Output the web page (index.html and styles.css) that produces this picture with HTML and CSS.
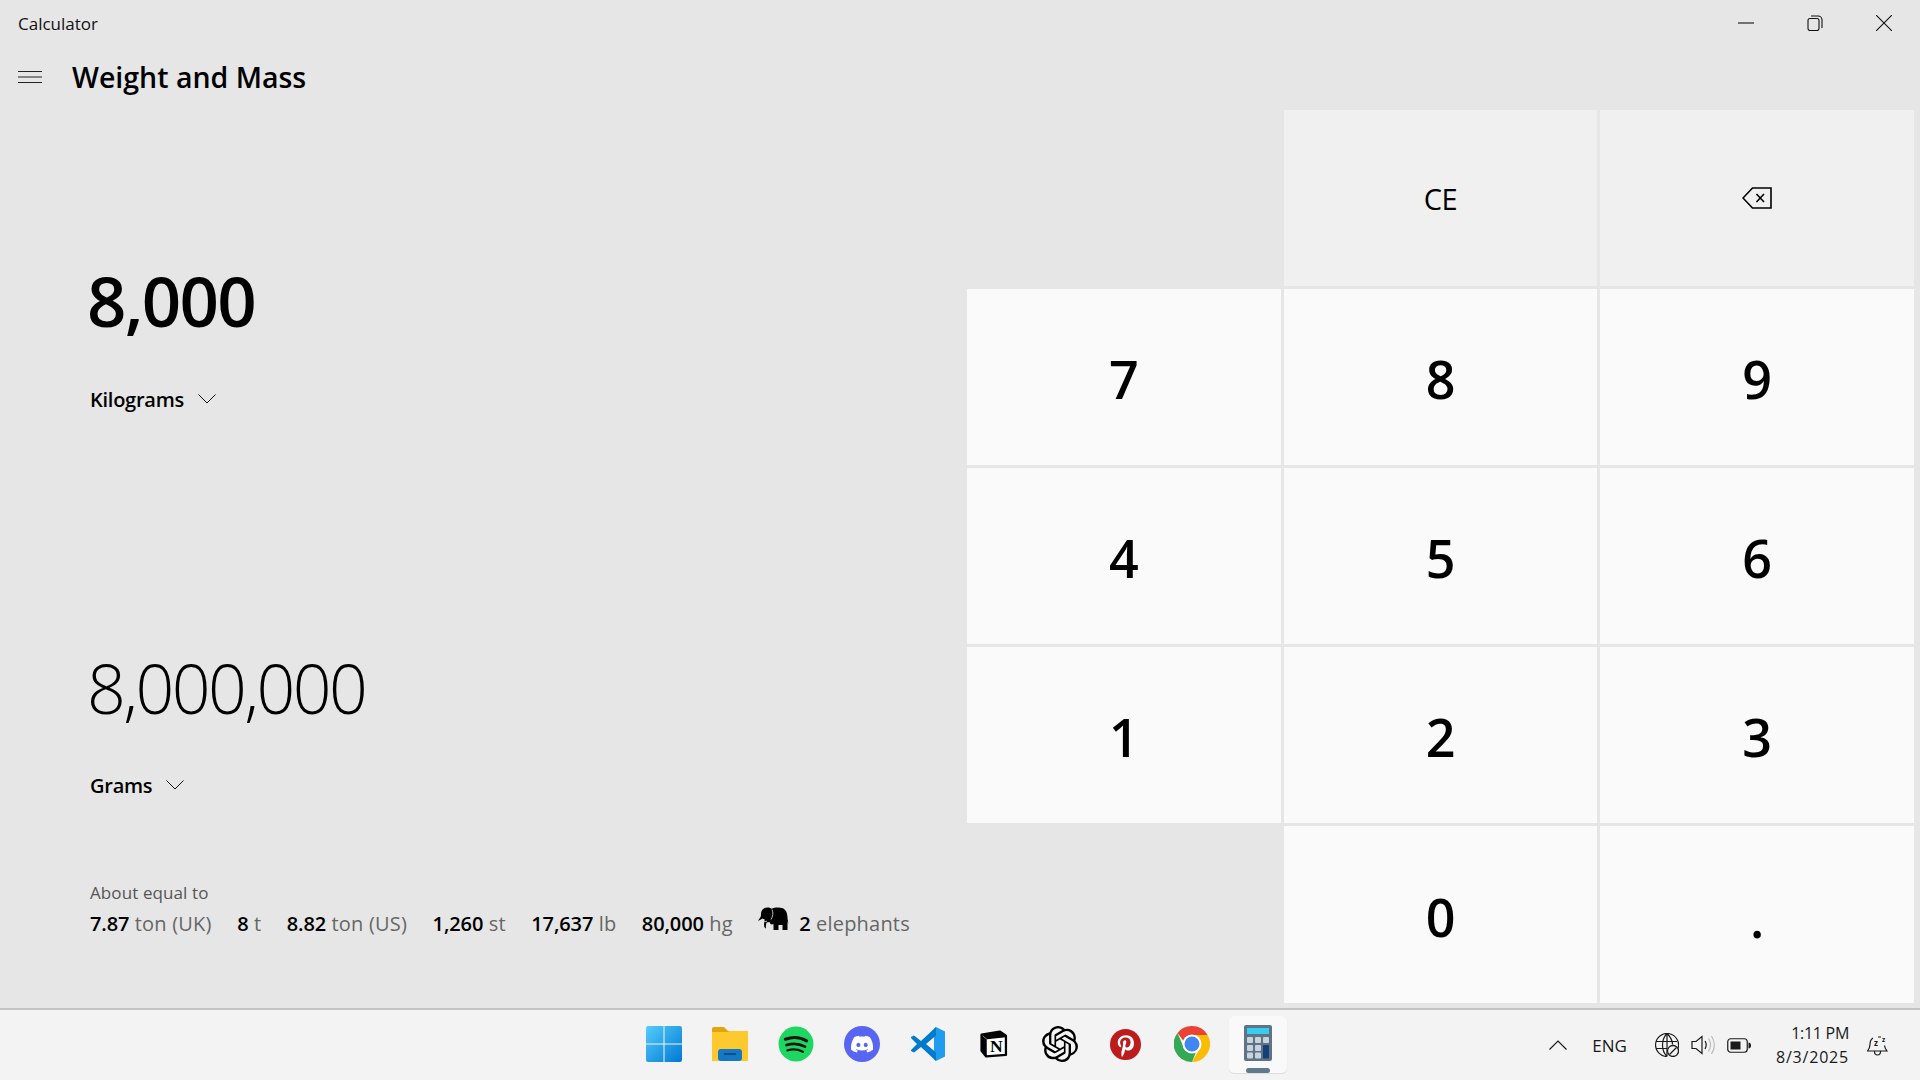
FILE: index.html
```html
<!DOCTYPE html>
<html lang="en">
<head>
<meta charset="utf-8">
<title>Calculator</title>
<link rel="stylesheet" href="styles.css">
</head>
<body>
<div class="window">
  <header class="titlebar">
    <span class="app-name">Calculator</span>
    <div class="caption">
      <svg class="cap-ico" viewBox="0 0 16 16"><path d="M0 8h16" /></svg>
      <svg class="cap-ico" viewBox="0 0 16 16"><rect x="1" y="3.5" width="11" height="12" rx="2"/><path d="M4 1h7a4 4 0 0 1 4 4v8"/></svg>
      <svg class="cap-ico" viewBox="0 0 16 16"><path d="M0 0l16 16M16 0L0 16"/></svg>
    </div>
  </header>
  <div class="navbar">
    <svg class="hamburger" viewBox="0 0 24 12"><path d="M0 .5h24M0 6h24M0 11.5h24"/></svg>
    <h1 class="mode">Weight and Mass</h1>
  </div>
  <main class="content">
    <section class="converter">
      <div class="value value-from">8,000</div>
      <div class="unit unit-first">Kilograms <svg class="chev" viewBox="0 0 18 10"><path d="M.5.5L9 9l8.500-8.500"/></svg></div>
      <div class="value value-to">8,000,000</div>
      <div class="unit unit-second">Grams <svg class="chev" viewBox="0 0 18 10"><path d="M.5.5L9 9l8.500-8.500"/></svg></div>
      <div class="about">About equal to</div>
      <div class="equiv">
        <span><b>7.87</b> ton (UK)</span>
        <span><b>8</b> t</span>
        <span><b>8.82</b> ton (US)</span>
        <span><b>1,260</b> st</span>
        <span><b>17,637</b> lb</span>
        <span><b>80,000</b> hg</span>
        <span class="eleph">
          <svg class="elephant" viewBox="0 0 31 24"><path d="M3 7C3 3 6 .5 9 .5c2 0 3.500.4 4.500 1.300C16 .5 21 0 24 1c4 1.300 5.500 5 5.500 10l1 7-1-4V23h-5v-5h-4v5h-5v-6c-1 .5-2 .5-3 0l-1-2-3 .5c-.5 2-.8 4-.5 6-1.500-.8-2-1.500-1.800-3-.3-2 0-4 .5-6-1-.5-1.500-.5-2-1L0 14l1.500-2.500C2.500 10.500 3 9 3 7z"/><path class="el-line" d="M14 2.500c1.500 3 1 7-1 10M5 13.500c1 1.500 2.500 1.500 4 .5"/></svg>
          <span><b>2</b> elephants</span>
        </span>
      </div>
    </section>
    <section class="keypad">
      <div class="key empty"></div>
      <div class="key op ce">CE</div>
      <div class="key op"><svg class="bksp" viewBox="0 0 30 22"><path d="M29 1H10.500L1 11l9.500 10H29zM14.500 7l7.500 8M22 7l-7.500 8"/></svg></div>
      <div class="key num">7</div><div class="key num">8</div><div class="key num">9</div>
      <div class="key num">4</div><div class="key num">5</div><div class="key num">6</div>
      <div class="key num">1</div><div class="key num">2</div><div class="key num">3</div>
      <div class="key empty"></div>
      <div class="key num">0</div>
      <div class="key num dot">.</div>
    </section>
  </main>
</div>
<footer class="taskbar">
  <div class="tb-side"></div>
  <div class="tb-apps">
    <div class="tb-app">
      <svg class="tb-ico" viewBox="0 0 35 35"><defs><linearGradient id="w1" x1="0" y1="0" x2="1" y2="1"><stop offset="0" stop-color="#55cdfb"/><stop offset="1" stop-color="#0078d4"/></linearGradient></defs><path fill="url(#w1)" d="M2 0h15v17H0V2a2 2 0 0 1 2-2zM18 0h15a2 2 0 0 1 2 2v15H18zM0 18h17v17H2a2 2 0 0 1-2-2zM18 18h17v15a2 2 0 0 1-2 2H18z"/></svg>
    </div>
    <div class="tb-app">
      <svg class="tb-ico" viewBox="0 0 36 34"><path fill="#e3a50d" d="M0 2a2 2 0 0 1 2-2h10l4 4h20v6H0z"/><path fill="#fdc92f" d="M0 5h15l3-1h18v30H0z"/><rect x="6" y="22" width="24" height="12" rx="3" fill="#1578c4"/><rect x="12" y="26" width="12" height="2" fill="#0d4f8c"/></svg>
    </div>
    <div class="tb-app">
      <svg class="tb-ico" viewBox="0 0 34 34"><circle cx="17" cy="17" r="16.500" fill="#1ed760"/><path class="spot" stroke-width="3" d="M7 12.500c7-2.500 14-2 20 1.500"/><path class="spot" stroke-width="2.600" d="M8 18c6-2 12-1.500 17.500 1.500"/><path class="spot" stroke-width="2.200" d="M9 23c5-1.500 10-1 14.500 1.300"/></svg>
    </div>
    <div class="tb-app">
      <svg class="tb-ico" viewBox="0 0 36 36"><circle cx="18" cy="18" r="18" fill="#5865f2"/><g transform="translate(7 7) scale(.92)"><path fill="#fff" d="M20.317 4.3698a19.7913 19.7913 0 00-4.8851-1.5152.0741.0741 0 00-.0785.0371c-.211.3753-.4447.8648-.6083 1.2495-1.8447-.2762-3.68-.2762-5.4868 0-.1636-.3933-.4058-.8742-.6177-1.2495a.077.077 0 00-.0785-.037 19.7363 19.7363 0 00-4.8852 1.515.0699.0699 0 00-.0321.0277C.5334 9.0458-.319 13.5799.0992 18.0578a.0824.0824 0 00.0312.0561c2.0528 1.5076 4.0413 2.4228 5.9929 3.0294a.0777.0777 0 00.0842-.0276c.4616-.6304.8731-1.2952 1.226-1.9942a.076.076 0 00-.0416-.1057c-.6528-.2476-1.2743-.5495-1.8722-.8923a.077.077 0 01-.0076-.1277c.1258-.0943.2517-.1923.3718-.2914a.0743.0743 0 01.0776-.0105c3.9278 1.7933 8.18 1.7933 12.0614 0a.0739.0739 0 01.0785.0095c.1202.099.246.1981.3728.2924a.077.077 0 01-.0066.1276 12.2986 12.2986 0 01-1.873.8914.0766.0766 0 00-.0407.1067c.3604.698.7719 1.3628 1.225 1.9932a.076.076 0 00.0842.0286c1.961-.6067 3.9495-1.5219 6.0023-3.0294a.077.077 0 00.0313-.0552c.5004-5.177-.8382-9.6739-3.5485-13.6604a.061.061 0 00-.0312-.0286zM8.02 15.3312c-1.1825 0-2.1569-1.0857-2.1569-2.419 0-1.3332.9555-2.4189 2.157-2.4189 1.2108 0 2.1757 1.0952 2.1568 2.419 0 1.3332-.9555 2.4189-2.1569 2.4189zm7.9748 0c-1.1825 0-2.1569-1.0857-2.1569-2.419 0-1.3332.9554-2.4189 2.1569-2.4189 1.2108 0 2.1757 1.0952 2.1568 2.419 0 1.3332-.946 2.4189-2.1568 2.4189Z"/></g></svg>
    </div>
    <div class="tb-app">
      <svg class="tb-ico" viewBox="0 0 36 36"><path fill="#1f9cf0" d="M26 1l9 4.500v25L26 35l-2-2V3z"/><path fill="#007acc" d="M26 1L11 15 4 9.500 1 11v1l6 6-6 6v1l3 1.500L11 21l15 14V26.500L16 18l10-8.500z"/></svg>
    </div>
    <div class="tb-app">
      <svg class="tb-ico notion" viewBox="0 0 27 27"><path fill="#fff" stroke="#000" stroke-width="2.200" stroke-linejoin="round" d="M1.500 4.500L19 1.500l6 4V24L6 25.500 1.500 20z"/><path fill="#000" d="M1.500 4.500L7 9l18-2-6-5.500zM1.500 5L6.500 9v16.500L1.500 20z"/><text x="15.800" y="21.500" class="notion-n">N</text></svg>
    </div>
    <div class="tb-app">
      <svg class="tb-ico" viewBox="0 0 24 24"><path fill="#000" d="M22.2819 9.8211a5.9847 5.9847 0 0 0-.5157-4.9108 6.0462 6.0462 0 0 0-6.5098-2.9A6.0651 6.0651 0 0 0 4.9807 4.1818a5.9847 5.9847 0 0 0-3.9977 2.9 6.0462 6.0462 0 0 0 .7427 7.0966 5.98 5.98 0 0 0 .511 4.9107 6.051 6.051 0 0 0 6.5146 2.9001A5.9847 5.9847 0 0 0 13.2599 24a6.0557 6.0557 0 0 0 5.7718-4.2058 5.9894 5.9894 0 0 0 3.9977-2.9001 6.0557 6.0557 0 0 0-.7475-7.0729zm-9.022 12.6081a4.4755 4.4755 0 0 1-2.8764-1.0408l.1419-.0804 4.7783-2.7582a.7948.7948 0 0 0 .3927-.6813v-6.7369l2.02 1.1686a.071.071 0 0 1 .038.052v5.5826a4.504 4.504 0 0 1-4.4945 4.4944zm-9.6607-4.1254a4.4708 4.4708 0 0 1-.5346-3.0137l.142.0852 4.783 2.7582a.7712.7712 0 0 0 .7806 0l5.8428-3.3685v2.3324a.0804.0804 0 0 1-.0332.0615L9.74 19.9502a4.4992 4.4992 0 0 1-6.1408-1.6464zM2.3408 7.8956a4.485 4.485 0 0 1 2.3655-1.9728V11.6a.7664.7664 0 0 0 .3879.6765l5.8144 3.3543-2.0201 1.1685a.0757.0757 0 0 1-.071 0l-4.8303-2.7865A4.504 4.504 0 0 1 2.3408 7.872zm16.5963 3.8558L13.1038 8.364 15.1192 7.2a.0757.0757 0 0 1 .071 0l4.8303 2.7913a4.4944 4.4944 0 0 1-.6765 8.1042v-5.6772a.79.79 0 0 0-.407-.667zm2.0107-3.0231l-.142-.0852-4.7735-2.7818a.7759.7759 0 0 0-.7854 0L9.409 9.2297V6.8974a.0662.0662 0 0 1 .0284-.0615l4.8303-2.7866a4.4992 4.4992 0 0 1 6.6802 4.66zM8.3065 12.863l-2.02-1.1638a.0804.0804 0 0 1-.038-.0567V6.0742a4.4992 4.4992 0 0 1 7.3757-3.4537l-.142.0805L8.704 5.459a.7948.7948 0 0 0-.3927.6813zm1.0976-2.3654l2.602-1.4998 2.6069 1.4998v2.9994l-2.5974 1.4997-2.6067-1.4997Z"/></svg>
    </div>
    <div class="tb-app">
      <svg class="tb-ico pin" viewBox="0 0 30 30"><circle cx="15" cy="15" r="15" fill="#bd1c1c"/><path fill="#fff" d="M15.500 6c-5 0-8 3.200-8 7 0 2 1 4 2.600 4.600.5.200.7-.9.800-1.400.1-.4-1.100-1-1.100-3 0-3 2.300-5 5.400-5 2.900 0 4.700 1.900 4.700 4.500 0 3-1.400 5.300-3.400 5.300-1.100 0-1.900-.9-1.600-2 .3-1.300.9-2.700.9-3.600 0-2.300-3.300-2-3.300 1.100 0 1 .3 1.600.3 1.600l-1.600 6.500c-.3 1.500-.1 3.500 0 4.900h1c.7-1.100 1.600-3 1.900-4.200l.7-2.700c.4.700 1.500 1.300 2.600 1.300 3.500 0 5.800-3.200 5.800-7.200C23.200 8.900 20 6 15.500 6z"/></svg>
    </div>
    <div class="tb-app">
      <svg class="tb-ico" viewBox="0 0 36 36"><path fill="#ea4335" d="M18 0a18 18 0 0 1 15.600 9H18a9 9 0 0 0-8.500 6L3.500 7A18 18 0 0 1 18 0z"/><path fill="#fbbc04" d="M33.600 9A18 18 0 0 1 18 36l7.800-13.500A9 9 0 0 0 25.800 13.500L18 9z"/><path fill="#34a853" d="M3.500 7L10.200 22.500A9 9 0 0 0 22 26L18 36A18 18 0 0 1 3.500 7z"/><circle cx="18" cy="18" r="9.500" fill="#fff"/><circle cx="18" cy="18" r="7.500" fill="#4285f4"/></svg>
    </div>
    <div class="tb-app active">
      <svg class="tb-ico calc" viewBox="0 0 28 36"><rect width="28" height="36" rx="2" fill="#5f7384"/><rect x="3" y="3" width="22" height="6" fill="#35cdf0"/><g fill="#c9d3dd"><rect x="3" y="12" width="6" height="6" rx="1"/><rect x="11" y="12" width="6" height="6" rx="1"/><rect x="19" y="12" width="6" height="6" rx="1"/><rect x="3" y="20" width="6" height="6" rx="1"/><rect x="11" y="20" width="6" height="6" rx="1"/><rect x="3" y="27.500" width="6" height="6" rx="1"/><rect x="11" y="27.500" width="6" height="6" rx="1"/></g><rect x="19" y="20" width="6" height="13.500" rx="1" fill="#123f78"/></svg>
      <span class="indicator"></span>
    </div>
  </div>
  <div class="tray">
    <svg class="tray-chev" viewBox="0 0 18 10"><path d="M.5 9.500L9 1l8.500 8.500"/></svg>
    <span class="lang">ENG</span>
    <svg class="tray-globe" viewBox="0 0 24 24"><g class="tray-line"><path d="M12 23.500a11.500 11.500 0 1 1 11-8M12 .5c-6 6-6 17 0 23M12 .5c4 4 5.500 8 5.500 11M1 8.500h21M1 15.500h11M12 .5v23"/></g><circle cx="18" cy="18" r="5.500" fill="#f3f3f3" stroke="#1a1a1a" stroke-width="1.300"/><path d="M14.500 21.500l7-7" stroke="#1a1a1a" stroke-width="1.300"/></svg>
    <svg class="tray-vol" viewBox="0 0 24 20"><path class="tray-line" d="M1 6.500h4L11 1.500v17l-6-5H1zM14 6c1.500 2.500 1.500 5.500 0 8"/><path class="tray-faint" d="M17.500 3.500c2.500 4 2.500 9 0 13M20.500 1c3.500 5.500 3.500 12.500 0 18"/></svg>
    <svg class="tray-batt" viewBox="0 0 24 15"><rect x=".75" y=".75" width="19.500" height="13.500" rx="3" class="tray-line"/><rect x="3.500" y="3.500" width="10" height="8" fill="#1a1a1a"/><path d="M21.500 4.500c1.500 0 2.500 1 2.500 3s-1 3-2.500 3z" fill="#1a1a1a"/></svg>
    <div class="clock"><span>1:11 PM</span><span class="date">8/3/2025</span></div>
    <svg class="tray-bell" viewBox="0 0 22 24"><path class="tray-line" d="M6 5c-2.500 1.500-3 4-3 6.500 0 3-1 4.500-2.500 6.500h19.500c-1.500-2-2.300-3-2.500-5.500M7.500 18.500c0 2.500 1.500 3.500 3 3.500s3-1 3-3.500M11 4h3"/><text x="7" y="13" class="bell-z">z</text><text x="15" y="9" class="bell-z small">z</text></svg>
  </div>
</footer>
</body>
</html>
```
FILE: styles.css
```css
* { box-sizing: border-box; }
html, body { margin: 0; height: 100%; }
body {
  width: 1920px; height: 1080px; overflow: hidden;
  display: flex; flex-direction: column;
  font-family: "Open Sans", "Noto Sans", sans-serif;
  color: #000; background: #e6e6e6;
}
.window { flex: 1; display: flex; flex-direction: column; min-height: 0; background: #e6e6e6; }
.titlebar { height: 48px; display: flex; align-items: center; justify-content: space-between; padding-left: 18px; }
.app-name { font-size: 17px; color: #111; margin-top: -1px; }
.caption { display: flex; gap: 53px; padding-right: 28px; align-self: center; margin-top: -2px; }
.cap-ico { width: 16px; height: 16px; fill: none; stroke: #111; stroke-width: 1.100; display: block; }
.navbar { height: 62px; display: flex; align-items: center; padding: 0 0 4px 18px; }
.hamburger { width: 24px; height: 12px; fill: none; stroke: #222; stroke-width: 1; }
.mode { margin: 0 0 0 30px; font-size: 28.5px; font-weight: 600; color: #000; line-height: 1; }
.content { flex: 1; display: flex; justify-content: space-between; min-height: 0; padding: 0 6px 5px 0; }
.converter { padding: 150px 0 0 87px; display: flex; flex-direction: column; align-items: flex-start; }
.value { height: 80px; line-height: 80px; white-space: nowrap; }
.value-from { font-size: 69px; font-weight: 600; letter-spacing: -1.7px; }
.value-to { font-size: 68px; font-weight: 300; letter-spacing: -2.5px; margin-top: 234px; }
.unit { height: 30px; display: flex; align-items: center; gap: 14px; font-size: 20px; font-weight: 600; letter-spacing: -.25px; padding-left: 3px; }
.unit-first { margin-top: 44px; }
.unit-second { margin-top: 42px; }
.chev { width: 18px; height: 10px; fill: none; stroke: #111; stroke-width: 1; }
.about { margin-top: 81px; height: 24px; line-height: 24px; font-size: 17px; color: #555; padding-left: 3px; letter-spacing: .1px; }
.equiv { margin-top: 3px; height: 30px; display: flex; align-items: center; gap: 25.5px; font-size: 20px; color: #666; padding-left: 3px; white-space: nowrap; letter-spacing: .2px; }
.equiv b { font-weight: 600; color: #000; letter-spacing: -.1px; }
.eleph { display: flex; align-items: center; gap: 10px; }
.elephant { width: 31px; height: 24px; fill: #000; margin-top: -8px; }
.el-line { fill: none; stroke: #e6e6e6; stroke-width: .8; }
.keypad { width: 947px; display: grid; grid-template-columns: repeat(3, 1fr); grid-template-rows: repeat(4, 176px) 1fr; gap: 3px; }
.key { display: flex; align-items: center; justify-content: center; }
.empty { background: transparent; }
.op { background: #f0f0f0; }
.num { background: #fafafa; font-size: 52px; font-weight: 600; padding-top: 3px; }
.ce { font-size: 29px; font-weight: 400; letter-spacing: -.5px; padding-top: 1px; }
.bksp { width: 30px; height: 22px; fill: none; stroke: #000; stroke-width: 1.600; margin-bottom: 1px; }
.dot { padding-top: 5px; }
.taskbar { height: 72px; flex: none; display: grid; grid-template-columns: 1fr auto 1fr; align-items: center; background: #f3f3f3; border-top: 2px solid #c2c2c2; }
.tb-apps { display: flex; gap: 8px; height: 100%; align-items: center; margin-left: 1px; }
.tb-app { width: 58px; height: 57px; display: flex; align-items: center; justify-content: center; position: relative; border-radius: 5px; margin-top: -2px; }
.tb-app.active { background: #f9f9f9; box-shadow: 0 1px 1px #ddd; }
.tb-ico { width: 36px; height: 36px; display: block; }
.notion { width: 28px; height: 28px; }
.pin { width: 31px; height: 31px; }
.calc { width: 28px; height: 36px; margin-top: -3px; }
.notion-n { font-family: "Liberation Serif", serif; font-weight: 700; font-size: 17px; text-anchor: middle; fill: #000; }
.spot { fill: none; stroke: #191414; stroke-linecap: round; }
.indicator { position: absolute; left: 17px; bottom: 0; width: 24px; height: 5px; border-radius: 3px; background: #5f7a8e; }
.tray { display: flex; align-items: center; justify-content: flex-end; height: 100%; padding-right: 31px; color: #1a1a1a; }
.tray-chev { width: 18px; height: 10px; fill: none; stroke: #1a1a1a; stroke-width: 1.200; margin-right: 25px; }
.lang { font-size: 17px; margin-right: 28px; }
.tray-line { fill: none; stroke: #1a1a1a; stroke-width: 1.200; }
.tray-faint { fill: none; stroke: #bbb; stroke-width: 1.200; }
.tray-globe { width: 24px; height: 24px; margin-right: 12px; }
.tray-vol { width: 24px; height: 20px; margin-right: 12px; }
.tray-batt { width: 24px; height: 15px; margin-right: 25px; }
.clock { display: flex; flex-direction: column; align-items: flex-end; font-size: 16px; line-height: 24px; letter-spacing: -.3px; margin-right: 18px; }
.date { letter-spacing: .8px; }
.tray-bell { width: 22px; height: 24px; }
.bell-z { font-size: 8px; font-weight: 700; fill: #1a1a1a; font-family: "Open Sans", sans-serif; }
.bell-z.small { font-size: 6.5px; }
```
